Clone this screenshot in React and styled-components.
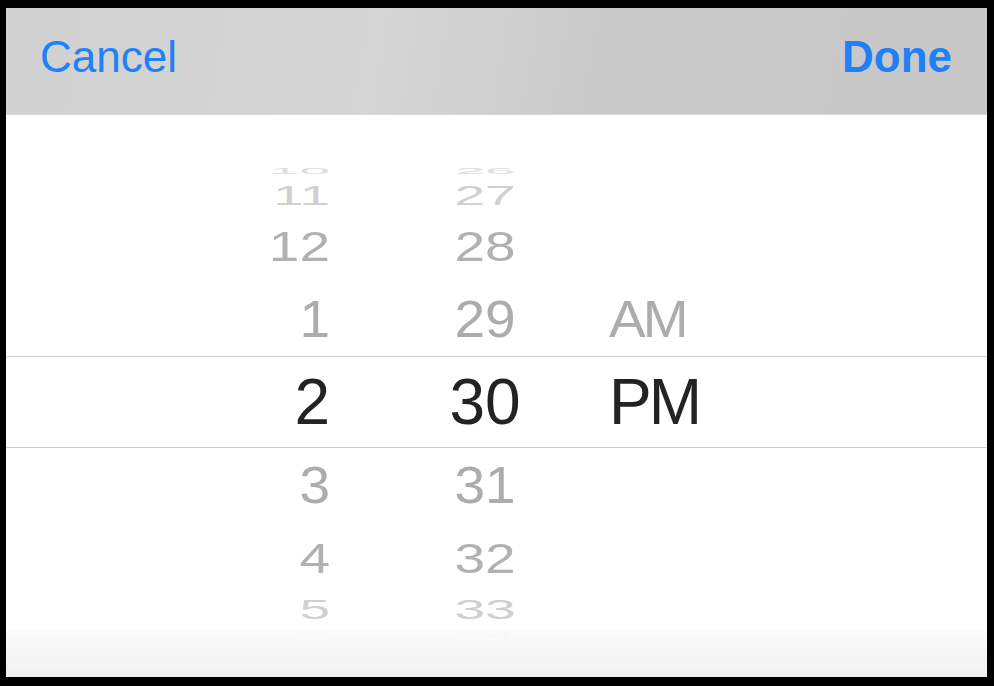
import React from "react";
import styled, { createGlobalStyle } from "styled-components";

const GlobalStyle = createGlobalStyle`
  * { box-sizing: border-box; }
  html, body { margin: 0; padding: 0; background: #000; }
  body { font-family: "Liberation Sans", Arial, sans-serif; }
`;

// wheel geometry: rows step 20deg round the drum, slot heights measured
const STEP = 20;
const SLOT = { 0: 92, 1: 74, 2: 72, 3: 30, 4: 20 };
const INK = { 0: "#232323", 1: "#acacac", 2: "#b1b1b1", 3: "#d0d0d0", 4: "#dedede" };

const hours = [10, 11, 12, 1, 2, 3, 4, 5, 6];
const minutes = [26, 27, 28, 29, 30, 31, 32, 33, 34];
const periods = ["", "", "", "AM", "PM", "", "", "", ""];

export default function App() {
  return (
    <>
      <GlobalStyle />
      <Frame>
        <Sheet>
          <Toolbar>
            <ToolButton>Cancel</ToolButton>
            <ToolButton $bold>Done</ToolButton>
          </Toolbar>
          <Picker>
            <Wheel>
              {hours.map((h, i) => {
                const k = i - 4;
                const d = Math.abs(k);
                const scale = Math.cos((k * STEP * Math.PI) / 180);
                const tilt = { transform: `scaleY(${scale})` };
                return (
                  <Row key={h} $height={SLOT[d]} $selected={k === 0}>
                    <HourCell>
                      <Label $selected={k === 0} $ink={INK[d]} style={tilt}>
                        {h}
                      </Label>
                    </HourCell>
                    <MinuteCell>
                      <Label $selected={k === 0} $ink={INK[d]} style={tilt}>
                        {minutes[i]}
                      </Label>
                    </MinuteCell>
                    <PeriodCell>
                      {periods[i] && (
                        <Label $selected={k === 0} $ink={INK[d]} $tight style={tilt}>
                          {periods[i]}
                        </Label>
                      )}
                    </PeriodCell>
                  </Row>
                );
              })}
            </Wheel>
            <BottomFade />
          </Picker>
        </Sheet>
      </Frame>
    </>
  );
}

const Frame = styled.div`
  width: 994px;
  height: 686px;
  padding: 8px 7px 9px 6px;
  background: #000;
`;

const Sheet = styled.div`
  height: 100%;
  display: flex;
  flex-direction: column;
  background: #fff;
`;

const Toolbar = styled.div`
  height: 107px;
  flex: none;
  display: flex;
  align-items: center;
  justify-content: space-between;
  padding: 0 35px 9px 34px;
  background: linear-gradient(100deg, #d1d1d1 0%, #d5d5d5 38%, #cacaca 60%, #c8c8c8 100%);
  border-bottom: 1px solid #dadada;
`;

const ToolButton = styled.span`
  font-size: 44px;
  line-height: 1;
  font-weight: ${(p) => (p.$bold ? 700 : 400)};
  color: #2080f6;
`;

const Picker = styled.div`
  flex: 1;
  position: relative;
  overflow: hidden;
  padding-top: 45px;
`;

const Wheel = styled.div`
  display: flex;
  flex-direction: column;
`;

const Row = styled.div`
  height: ${(p) => p.$height}px;
  display: flex;
  align-items: center;
  border-top: ${(p) => (p.$selected ? "1px solid #cfcfcf" : "none")};
  border-bottom: ${(p) => (p.$selected ? "1px solid #cfcfcf" : "none")};
`;

const HourCell = styled.div`
  width: 324px;
  display: flex;
  justify-content: flex-end;
`;

const MinuteCell = styled.div`
  width: 108px;
  margin-left: 101px;
  display: flex;
  justify-content: center;
`;

const PeriodCell = styled.div`
  margin-left: 70px;
  display: flex;
`;

const Label = styled.span`
  display: block;
  font-size: ${(p) => (p.$selected ? 64 : 55)}px;
  line-height: 1;
  letter-spacing: ${(p) => (p.$tight ? "-3px" : "0")};
  color: ${(p) => p.$ink};
  white-space: nowrap;
  transform-origin: 50% 50%;
`;

const BottomFade = styled.div`
  position: absolute;
  left: 0;
  right: 0;
  bottom: 0;
  height: 46px;
  background: linear-gradient(to bottom, rgba(251, 251, 251, 0.9), #f1f1f1);
`;
